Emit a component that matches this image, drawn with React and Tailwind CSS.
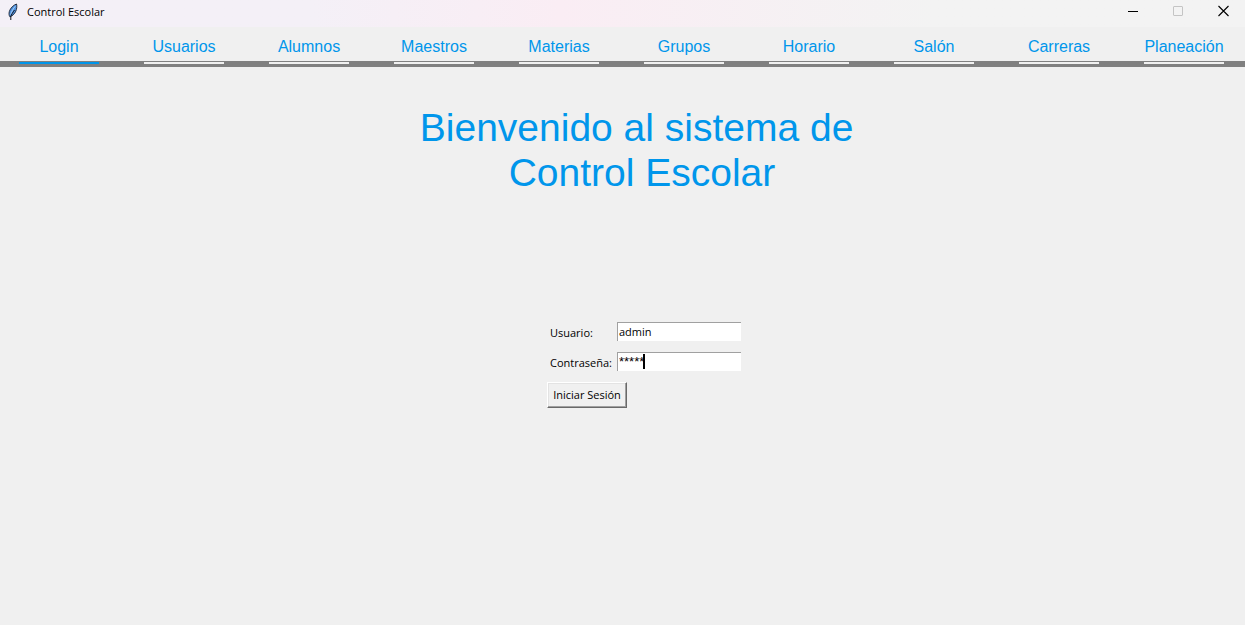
import React from "react";

const TABS = ["Login", "Usuarios", "Alumnos", "Maestros", "Materias", "Grupos", "Horario", "Salón", "Carreras", "Planeación"];

function FeatherIcon() {
  return (
    <svg width="14" height="18" viewBox="0 0 14 18" aria-hidden="true">
      <path d="M10.500 1C7.500 2 4.200 5.200 3.300 8.600C2.800 10.600 3 12.600 3.900 13.800C6 13.200 8.600 11 9.800 8.200C10.800 5.800 11.100 3 10.500 1Z" fill="#4f92e0" stroke="#1a2030" strokeWidth="0.900" />
      <path d="M9.300 3.200C7.200 5.600 5.600 8.400 4.700 11.500" fill="none" stroke="#a9d0f7" strokeWidth="1" />
      <path d="M8.500 7C6.800 9.500 5.400 11.500 4.800 13.500V17" fill="none" stroke="#10131c" strokeWidth="1" />
    </svg>
  );
}

function TitleBar() {
  return (
    <header className="flex h-[27px] items-start justify-between bg-linear-to-r from-[#f4f0f7] from-25% via-[#faedf4] via-45% to-[#f3f3f3] to-75%">
      <div className="flex h-6 items-center gap-[7px] pl-1.5">
        <FeatherIcon />
        <span className="font-['Open_Sans',sans-serif] text-[11px] leading-4 text-black">Control Escolar</span>
      </div>
      <div className="flex text-black">
        <button type="button" aria-label="Minimizar" className="flex h-[22px] w-[45px] items-center justify-center">
          <svg width="12" height="12" viewBox="0 0 12 12" aria-hidden="true"><path d="M1 6.500h10" stroke="currentColor" /></svg>
        </button>
        <button type="button" aria-label="Maximizar" disabled className="flex h-[22px] w-[45px] items-center justify-center text-[#c4c4c4]">
          <svg width="12" height="12" viewBox="0 0 12 12" aria-hidden="true"><rect x="1.500" y="1.500" width="9" height="9" rx="0.500" fill="none" stroke="currentColor" /></svg>
        </button>
        <button type="button" aria-label="Cerrar" className="flex h-[22px] w-[45px] items-center justify-center">
          <svg width="12" height="12" viewBox="0 0 12 12" aria-hidden="true"><path d="M1.500 1l10 10M11.500 1l-10 10" stroke="currentColor" strokeWidth="1.100" /></svg>
        </button>
      </div>
    </header>
  );
}

function Tabs() {
  return (
    <nav className="flex justify-between bg-linear-to-b from-[#f0f0f0] from-[34px] to-[#808080] to-[34px] pr-[21px] pb-[3px] pl-[19px]">
      {TABS.map((name, i) => (
        <button
          key={name}
          type="button"
          className={`flex h-[37px] w-20 justify-center border-b-2 pt-2.5 text-[16px] leading-5 whitespace-nowrap text-[#0096eb] ${i === 0 ? "border-[#0096eb]" : "border-[#f0f0f0]"}`}
        >
          {name}
        </button>
      ))}
    </nav>
  );
}

const FIELD = "h-[19px] w-full border-t border-l border-[#a0a0a0] bg-white px-px pb-0.5 leading-4 text-black outline-none";

function LoginForm() {
  return (
    <form className="mt-[127px] ml-1 w-[194px] font-['Open_Sans',sans-serif] text-[11px] leading-4 text-black" onSubmit={(e) => e.preventDefault()}>
      <div className="grid grid-cols-[67px_1fr] items-end gap-x-[3px] gap-y-[11px]">
        <label htmlFor="usuario" className="pl-[3px] whitespace-nowrap">Usuario:</label>
        <input id="usuario" type="text" defaultValue="admin" className={FIELD} />
        <label htmlFor="contrasena" className="pl-[3px] whitespace-nowrap">Contraseña:</label>
        <div className="relative flex">
          <input id="contrasena" type="text" autoComplete="off" defaultValue="*****" className={`${FIELD} font-['Liberation_Sans',Arial,sans-serif] text-[13px]`} />
          <span className="absolute top-0.5 left-[26px] h-[15px] w-0.5 bg-black" aria-hidden="true" />
        </div>
      </div>
      <button
        type="submit"
        className="mt-[11px] h-[26px] w-20 border border-t-white border-r-[#696969] border-b-[#696969] border-l-white whitespace-nowrap shadow-[inset_-1px_-1px_0_#a0a0a0,inset_1px_1px_0_#e3e3e3]"
      >
        Iniciar Sesión
      </button>
    </form>
  );
}

export default function App() {
  return (
    <div className="flex min-h-screen flex-col bg-[#f0f0f0] font-['Liberation_Sans',Arial,sans-serif]">
      <TitleBar />
      <Tabs />
      <main className="flex flex-col items-center pt-[38px] pl-[39px]">
        <h1 className="text-center text-[39px] leading-[45px] whitespace-pre text-[#0096eb]">{"Bienvenido al sistema de \nControl Escolar"}</h1>
        <LoginForm />
      </main>
    </div>
  );
}
